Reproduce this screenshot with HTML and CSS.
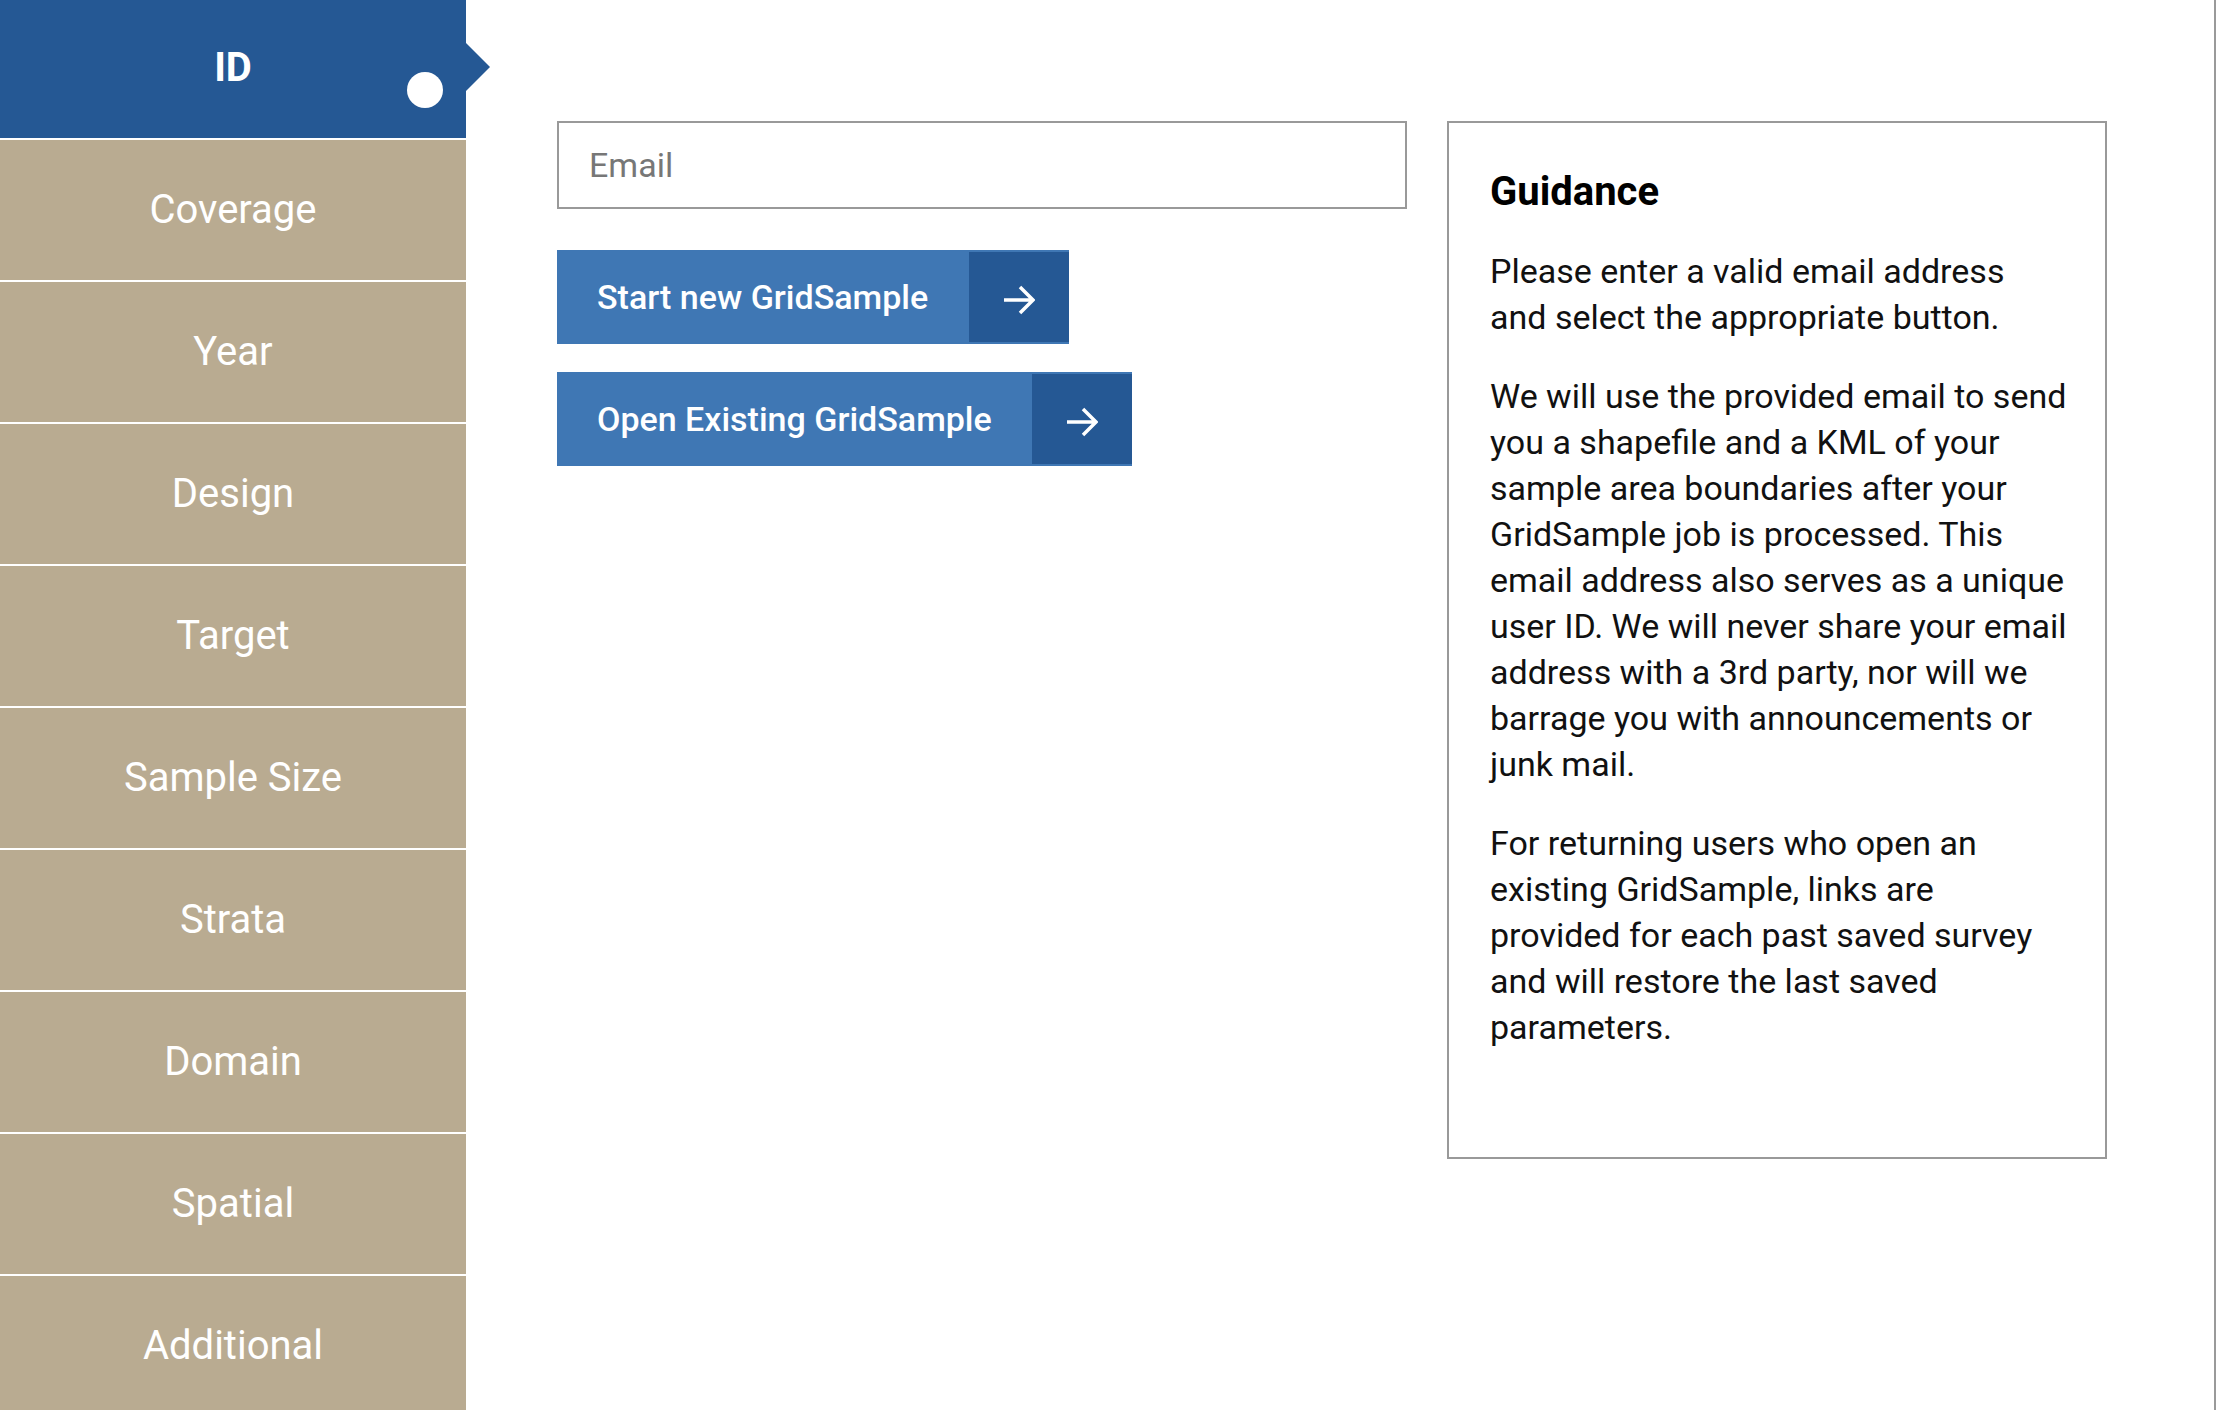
FILE: index.html
```html
<!DOCTYPE html>
<html lang="en">
<head>
<meta charset="utf-8">
<title>GridSample</title>
<link rel="stylesheet" href="styles.css">
</head>
<body>
<div class="page">
  <nav class="sidebar">
    <div class="step step-active"><span class="step-label">ID</span><span class="step-dot"></span></div>
    <div class="step"><span class="step-label">Coverage</span></div>
    <div class="step"><span class="step-label">Year</span></div>
    <div class="step"><span class="step-label">Design</span></div>
    <div class="step"><span class="step-label">Target</span></div>
    <div class="step"><span class="step-label">Sample Size</span></div>
    <div class="step"><span class="step-label">Strata</span></div>
    <div class="step"><span class="step-label">Domain</span></div>
    <div class="step"><span class="step-label">Spatial</span></div>
    <div class="step"><span class="step-label">Additional</span></div>
  </nav>
  <main class="main">
    <div class="form">
      <input class="email" type="email" placeholder="Email">
      <button class="action action-start" type="button">
        <span class="action-text">Start new GridSample</span>
        <span class="action-icon"><svg width="32" height="30" viewBox="0 0 32 30"><path d="M1 15H30M17 2L30 15L17 28" fill="none" stroke="#fff" stroke-width="3.5"/></svg></span>
      </button>
      <button class="action action-open" type="button">
        <span class="action-text">Open Existing GridSample</span>
        <span class="action-icon"><svg width="32" height="30" viewBox="0 0 32 30"><path d="M1 15H30M17 2L30 15L17 28" fill="none" stroke="#fff" stroke-width="3.5"/></svg></span>
      </button>
    </div>
    <aside class="guidance">
      <h2 class="guidance-title">Guidance</h2>
      <p class="guidance-text">Please enter a valid email address<br>and select the appropriate button.</p>
      <p class="guidance-text">We will use the provided email to send you a shapefile and a KML of your sample area boundaries after your GridSample job is processed. This email address also serves as a unique user ID. We will never share your email address with a 3rd party, nor will we barrage you with announcements or junk mail.</p>
      <p class="guidance-text">For returning users who open an existing GridSample, links are provided for each past saved survey and will restore the last saved parameters.</p>
    </aside>
  </main>
</div>
</body>
</html>
```
FILE: styles.css
```css
html, body {
  margin: 0;
  padding: 0;
  background: #ffffff;
}

body {
  width: 2216px;
  height: 1410px;
  overflow: hidden;
  font-family: Roboto, "Noto Sans", "Liberation Sans", sans-serif;
}

.page {
  display: flex;
  width: 2216px;
  height: 1410px;
  box-sizing: border-box;
  border-right: 2px solid #9a9a9a;
}

.sidebar {
  width: 466px;
  flex: none;
  display: flex;
  flex-direction: column;
  gap: 2px;
  background: #ffffff;
}

.step {
  height: 140px;
  flex: none;
  display: flex;
  align-items: center;
  justify-content: center;
  background: #b9ab91;
  color: #ffffff;
  font-size: 40px;
  font-weight: 400;
}

.step-label {
  margin-top: -2px;
}

.step-active {
  position: relative;
  height: 138px;
  background: #255894;
  font-weight: 700;
}

.step-active .step-label {
  margin-top: -4px;
}

.step-active::after {
  content: "";
  position: absolute;
  left: 466px;
  top: 43px;
  width: 0;
  height: 0;
  border-top: 24.5px solid transparent;
  border-bottom: 24.5px solid transparent;
  border-left: 24px solid #255894;
}

.step-dot {
  position: absolute;
  left: 407px;
  top: 72px;
  width: 36px;
  height: 36px;
  border-radius: 50%;
  background: #ffffff;
}

.main {
  flex: 1;
  display: flex;
  align-items: flex-start;
  gap: 40px;
  padding: 121px 0 0 91px;
}

.form {
  width: 850px;
  display: flex;
  flex-direction: column;
  align-items: flex-start;
}

.email {
  width: 850px;
  height: 88px;
  box-sizing: border-box;
  margin: 0;
  padding: 0 30px;
  border: 2px solid #999999;
  border-radius: 0;
  outline: none;
  font-family: Roboto, "Noto Sans", sans-serif;
  font-size: 34px;
  color: #333333;
  background: #ffffff;
}

.email::placeholder {
  color: #777777;
}

.action {
  display: flex;
  align-items: stretch;
  height: 94px;
  box-sizing: border-box;
  margin: 41px 0 0 0;
  padding: 2px 0;
  border: none;
  border-radius: 0;
  background: #3f77b4;
  color: #ffffff;
  font-family: Roboto, "Noto Sans", sans-serif;
  font-size: 34px;
  font-weight: 500;
  cursor: pointer;
}

.action-open {
  margin-top: 28px;
}

.action-text {
  display: flex;
  align-items: center;
  padding: 0 40px 0 40px;
  white-space: nowrap;
}

.action-start .action-text {
  padding-right: 41px;
}

.action-icon {
  width: 100px;
  display: flex;
  align-items: center;
  justify-content: center;
  background: #255894;
  padding-top: 5px;
  box-sizing: border-box;
}

.guidance {
  width: 660px;
  height: 1038px;
  flex: none;
  box-sizing: border-box;
  border: 2px solid #999999;
  padding: 45px 36px 0 41px;
  color: #111111;
}

.guidance-title {
  margin: 0;
  font-size: 40px;
  font-weight: 700;
  line-height: 47px;
  color: #000000;
}

.guidance-text {
  margin: 33px 0 0 0;
  font-size: 34px;
  line-height: 46px;
}
```
